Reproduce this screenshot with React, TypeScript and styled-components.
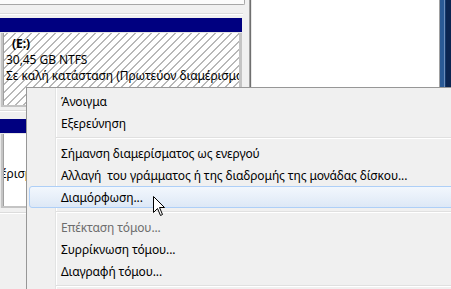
import React from 'react'
import styled, { createGlobalStyle } from 'styled-components'

const GlobalStyle = createGlobalStyle`
  html, body {
    margin: 0;
    padding: 0;
    background: #f0f0f0;
  }
  body {
    font-family: 'Noto Sans', 'DejaVu Sans', sans-serif;
  }
`

const Screen = styled.div`
  position: relative;
  width: 451px;
  height: 289px;
  overflow: hidden;
  display: flex;
  background: #f0f0f0;
`

const DiskPane = styled.div`
  width: 249px;
  display: flex;
  flex-direction: column;
  background: #f0f0f0;
  font-family: 'Noto Sans', 'DejaVu Sans', sans-serif;
  font-size: 12px;
  color: #000;
`

const ScrollThumb = styled.div`
  width: 244px;
  height: 4px;
  background: #fbfbfb;
  border-bottom: 1px solid #a7a7a7;
  border-right: 1px solid #a7a7a7;
  border-bottom-right-radius: 2px;
`

const Gap = styled.div<{ h: number }>`
  height: ${(p) => p.h}px;
`

const RuleLine = styled.div`
  height: 1px;
  background: #dcdcdc;
  border-bottom: 1px solid #fff;
  width: 243px;
`

const Partition = styled.div`
  width: 242px;
  display: flex;
  flex-direction: column;
`

const PartHeader = styled.div`
  height: 14px;
  background: #000080;
  border-bottom: 1px solid #e6e6e6;
`

const PartFrame = styled.div`
  display: flex;
  background: #c4c4c4;
  padding: 0 3px 2px 2px;
  border-left: 1px solid #e8e8e8;
`

const PartBody = styled.div<{ hatched?: boolean }>`
  flex: 1;
  height: 69px;
  overflow: hidden;
  padding: 3px 0 0 2px;
  border-left: 1px solid #a0a0a0;
  background: ${(p) =>
    p.hatched
      ? 'repeating-linear-gradient(-45deg, #ffffff 0 4.7px, #b8b8b8 4.7px 5.66px)'
      : '#ffffff'};
  white-space: nowrap;
  line-height: 16px;
  font-size: 12px;
  letter-spacing: -0.05px;
`

const Drive = styled.div`
  font-weight: bold;
  padding-left: 6px;
`

const LowerText = styled.div`
  margin: 29px 0 0 -5px;
`

const Divider = styled.div`
  width: 3px;
  height: 87px;
  background: linear-gradient(90deg, #a0a0a0 0 1px, #6f6f6f 1px 2px, #e8e8e8 2px);
`

const WhitePane = styled.div`
  width: 187px;
  height: 87px;
  background: #ffffff;
  border-right: 1px solid #a0a0a0;
`

const Stripes = styled.div`
  flex: 1;
  height: 87px;
  background: linear-gradient(
    90deg,
    #2a5a96 0 4px,
    #6a8cbc 4px 5px,
    #133a6e 5px 6px,
    #0b2551 6px
  );
`

const Menu = styled.div`
  position: absolute;
  left: 26px;
  top: 87px;
  width: 440px;
  height: 215px;
  box-sizing: border-box;
  border: 1px solid #979797;
  background: #f0f0f0;
  padding: 2px;
  font-family: 'Noto Sans', 'DejaVu Sans', sans-serif;
  font-size: 12px;
  letter-spacing: -0.12px;
  color: #000;
`

const Gutter = styled.div`
  position: absolute;
  left: 28px;
  top: 0;
  bottom: 0;
  width: 1px;
  background: #e2e3e3;
  border-right: 1px solid #ffffff;
`

const Item = styled.div<{ active?: boolean; disabled?: boolean }>`
  position: relative;
  height: 22px;
  box-sizing: border-box;
  display: flex;
  align-items: center;
  padding-left: 31px;
  border: 1px solid ${(p) => (p.active ? '#aecff7' : 'transparent')};
  border-radius: 3px;
  background: ${(p) =>
    p.active ? 'linear-gradient(180deg, #f2f7fd 0%, #e7eff9 55%, #dde8f6 100%)' : 'transparent'};
  color: ${(p) => (p.disabled ? '#6d6d6d' : '#000')};
  white-space: pre;
`

const Separator = styled.div`
  position: relative;
  height: 8px;
  &::after {
    content: '';
    position: absolute;
    left: 27px;
    right: 0;
    top: 3px;
    height: 1px;
    background: #e0e0e0;
    border-bottom: 1px solid #ffffff;
  }
`

const Cursor = styled.svg`
  position: absolute;
  left: 153px;
  top: 196px;
`

type Entry = { label: string; active?: boolean; disabled?: boolean } | 'sep'

const entries: Entry[] = [
  { label: 'Άνοιγμα' },
  { label: 'Εξερεύνηση' },
  'sep',
  { label: 'Σήμανση διαμερίσματος ως ενεργού' },
  { label: 'Αλλαγή  του γράμματος ή της διαδρομής της μονάδας δίσκου...' },
  { label: 'Διαμόρφωση...', active: true },
  'sep',
  { label: 'Επέκταση τόμου...', disabled: true },
  { label: 'Συρρίκνωση τόμου...' },
  { label: 'Διαγραφή τόμου...' },
  'sep',
]

export default function App() {
  return (
    <>
      <GlobalStyle />
      <Screen>
        <DiskPane>
          <ScrollThumb />
          <Gap h={8} />
          <RuleLine />
          <Gap h={3} />
          <Partition>
            <PartHeader />
            <PartFrame>
              <PartBody hatched>
                <Drive>(E:)</Drive>
                <div>30,45 GB NTFS</div>
                <div>Σε καλή κατάσταση (Πρωτεύον διαμέρισμα</div>
              </PartBody>
            </PartFrame>
          </Partition>
          <Gap h={3} />
          <RuleLine />
          <Gap h={7} />
          <Partition>
            <PartHeader />
            <PartFrame>
              <PartBody>
                <LowerText>έρισμ</LowerText>
              </PartBody>
            </PartFrame>
          </Partition>
          <Gap h={4} />
          <RuleLine />
        </DiskPane>
        <Divider />
        <WhitePane />
        <Stripes />

        <Menu>
          <Gutter />
          {entries.map((e, i) =>
            e === 'sep' ? (
              <Separator key={i} />
            ) : (
              <Item key={i} active={e.active} disabled={e.disabled}>
                {e.label}
              </Item>
            )
          )}
        </Menu>

        <Cursor width="13" height="21" viewBox="0 0 13 21">
          <path
            d="M0.5 0.5 L0.5 16.5 L4.5 12.5 L7.5 19.5 L9.5 18.5 L6.5 11.5 L11.5 11.5 Z"
            fill="#fff"
            stroke="#000"
            strokeWidth="1"
            strokeLinejoin="miter"
          />
        </Cursor>
      </Screen>
    </>
  )
}
